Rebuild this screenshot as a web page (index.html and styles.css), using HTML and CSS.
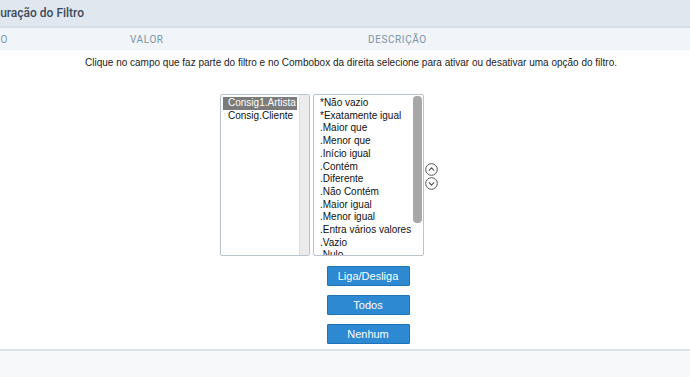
FILE: index.html
```html
<!DOCTYPE html>
<html>

<head>
    <title>Configuração do Filtro</title>
    <link rel="stylesheet" href="styles.css">
</head>

<body>
    <div class="titlebar">
        <span class="title">Configuração do Filtro</span>
    </div>
    <div class="colhead">
        <span class="col col-campo">Campo</span>
        <span class="col col-valor">Valor</span>
        <span class="col col-desc">Descrição</span>
    </div>

    <div class="content">
        <p class="hint">Clique no campo que faz parte do filtro e no Combobox da direita selecione para ativar ou desativar uma opção do filtro.</p>

        <div class="pickers">
            <div class="listbox fields">
                <ul class="items">
                    <li class="sel">Consig1.Artista</li>
                    <li>Consig.Cliente</li>
                </ul>
                <div class="track"></div>
            </div>
            <div class="listbox options">
                <ul class="items">
                    <li>*Não vazio</li>
                    <li>*Exatamente igual</li>
                    <li>.Maior que</li>
                    <li>.Menor que</li>
                    <li>.Início igual</li>
                    <li>.Contém</li>
                    <li>.Diferente</li>
                    <li>.Não Contém</li>
                    <li>.Maior igual</li>
                    <li>.Menor igual</li>
                    <li>.Entra vários valores</li>
                    <li>.Vazio</li>
                    <li>.Nulo</li>
                </ul>
                <div class="track"><div class="thumb"></div></div>
            </div>
            <div class="arrows">
                <svg width="13" height="13" viewBox="0 0 13 13">
                    <circle cx="6.5" cy="6.5" r="5.8" fill="none" stroke="#555" stroke-width="1" />
                    <path d="M3.8 7.6 L6.5 4.9 L9.2 7.6" fill="none" stroke="#555" stroke-width="1.1" />
                </svg>
                <svg width="13" height="13" viewBox="0 0 13 13">
                    <circle cx="6.5" cy="6.5" r="5.8" fill="none" stroke="#555" stroke-width="1" />
                    <path d="M3.8 5.4 L6.5 8.1 L9.2 5.4" fill="none" stroke="#555" stroke-width="1.1" />
                </svg>
            </div>
        </div>

        <div class="buttons">
            <button>Liga/Desliga</button>
            <button>Todos</button>
            <button>Nenhum</button>
        </div>
    </div>

    <div class="footer"></div>
</body>

</html>
```

FILE: styles.css
```css
body {
    margin: 0;
    font-family: "Liberation Sans", Arial, sans-serif;
    background-color: #fff;
    overflow: hidden;
}

.titlebar {
    height: 26px;
    background-color: #e1e7ef;
    border-bottom: 2px solid #d6dee7;
    display: flex;
    align-items: center;
    overflow: hidden;
}

.title {
    margin-left: -35px;
    font-family: Roboto, "Liberation Sans", sans-serif;
    font-size: 12px;
    font-weight: 500;
    color: #3c4a58;
    white-space: nowrap;
}

.colhead {
    height: 22px;
    background-color: #f1f4f8;
    display: flex;
    align-items: center;
    overflow: hidden;
    font-family: Roboto, "Liberation Sans", sans-serif;
    font-size: 10px;
    letter-spacing: 0.6px;
    text-transform: uppercase;
    color: #7996a6;
}

.col-campo {
    margin-left: -30px;
    width: 160px;
}

.col-valor {
    width: 238px;
}

.content {
    height: 299px;
    border-bottom: 2px solid #dde3ea;
}

.hint {
    margin: 0;
    padding-top: 7px;
    padding-left: 12px;
    text-align: center;
    font-size: 10px;
    color: #222;
}

.pickers {
    display: flex;
    justify-content: center;
    align-items: center;
    margin-top: 26px;
    padding-right: 32px;
}

.listbox {
    height: 160px;
    border: 1px solid #b9c3cc;
    border-radius: 2px;
    display: flex;
    overflow: hidden;
    background-color: #fff;
}

.fields {
    width: 88px;
}

.options {
    width: 109px;
    margin-left: 3px;
}

.items {
    list-style: none;
    margin: 0;
    padding: 2px 2px 0 2px;
    flex: 1;
    font-size: 10px;
    line-height: 12.7px;
    color: #111;
    white-space: nowrap;
    overflow: hidden;
}

.items li {
    padding: 0 5px;
}

.options .items {
    padding: 2px 0 0 1px;
}

.items li.sel {
    background-color: #7b7b7b;
    color: #fff;
}

.track {
    width: 9px;
    background-color: #ececec;
    border-left: 1px solid #dedede;
}

.options .track {
    background-color: #fff;
    border-left: none;
    padding: 1px 1px 0 0;
}

.thumb {
    height: 127px;
    background-color: #a8a8a8;
    border-radius: 4px;
}

.arrows {
    display: flex;
    flex-direction: column;
    gap: 1px;
    margin-left: 1px;
    margin-top: 2px;
}

.arrows svg {
    display: block;
}

.buttons {
    display: flex;
    flex-direction: column;
    align-items: center;
    gap: 9px;
    margin-top: 10px;
    padding-left: 46px;
}

.buttons button {
    width: 83px;
    height: 20px;
    background-color: #2c89d2;
    border: 1px solid #1f74b8;
    border-radius: 1px;
    color: #fff;
    font-family: "Liberation Sans", Arial, sans-serif;
    font-size: 11px;
    padding: 0;
}

.footer {
    height: 30px;
    background-color: #f6f8fa;
}
```
